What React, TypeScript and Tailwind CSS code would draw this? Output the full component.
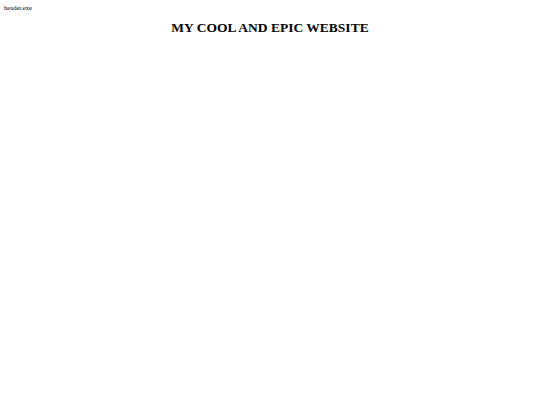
export default function App() {
  return (
    <div className="min-h-screen bg-white text-black font-['Liberation_Serif',serif]">
      <div className="px-1 pt-[4px] text-[6.6px] leading-[8px]">header.exe</div>
      <h1 className="mt-[8px] text-center text-[13.5px] font-bold leading-[16px]">
        MY COOL AND EPIC WEBSITE
      </h1>
    </div>
  );
}
